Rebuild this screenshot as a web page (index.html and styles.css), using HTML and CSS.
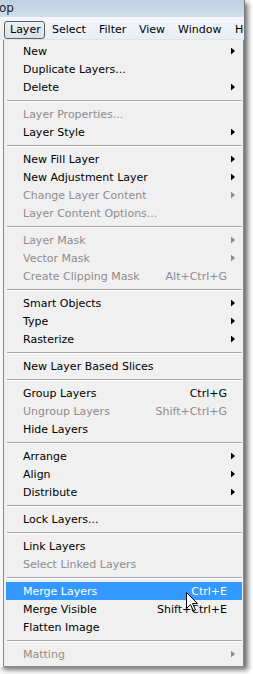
FILE: index.html
```html
<html lang="en">
<head>
    <meta charset="UTF-8">
    <meta name="viewport" content="width=device-width, initial-scale=1.0">
    <title>Layer menu</title>
    <link rel="stylesheet" href="styles.css">
</head>
<body>
    <div class="shot">
        <div class="titlebar"><span class="title">op</span></div>
        <div class="menubar">
            <span class="top open">Layer</span>
            <span class="top m-select">Select</span>
            <span class="top m-filter">Filter</span>
            <span class="top m-view">View</span>
            <span class="top m-window">Window</span>
            <span class="top m-help">Help</span>
        </div>
        <div class="body">
            <div class="menu">
                <div class="item"><span class="label">New</span><span class="arrow"></span></div>
                <div class="item"><span class="label">Duplicate Layers...</span></div>
                <div class="item"><span class="label">Delete</span><span class="arrow"></span></div>
                <div class="sep"></div>
                <div class="item off"><span class="label">Layer Properties...</span></div>
                <div class="item"><span class="label">Layer Style</span><span class="arrow"></span></div>
                <div class="sep"></div>
                <div class="item"><span class="label">New Fill Layer</span><span class="arrow"></span></div>
                <div class="item"><span class="label">New Adjustment Layer</span><span class="arrow"></span></div>
                <div class="item off"><span class="label">Change Layer Content</span><span class="arrow"></span></div>
                <div class="item off"><span class="label">Layer Content Options...</span></div>
                <div class="sep"></div>
                <div class="item off"><span class="label">Layer Mask</span><span class="arrow"></span></div>
                <div class="item off"><span class="label">Vector Mask</span><span class="arrow"></span></div>
                <div class="item off"><span class="label">Create Clipping Mask</span><span class="key">Alt+Ctrl+G</span></div>
                <div class="sep"></div>
                <div class="item"><span class="label">Smart Objects</span><span class="arrow"></span></div>
                <div class="item"><span class="label">Type</span><span class="arrow"></span></div>
                <div class="item"><span class="label">Rasterize</span><span class="arrow"></span></div>
                <div class="sep"></div>
                <div class="item"><span class="label">New Layer Based Slices</span></div>
                <div class="sep"></div>
                <div class="item"><span class="label">Group Layers</span><span class="key">Ctrl+G</span></div>
                <div class="item off"><span class="label">Ungroup Layers</span><span class="key">Shift+Ctrl+G</span></div>
                <div class="item"><span class="label">Hide Layers</span></div>
                <div class="sep"></div>
                <div class="item"><span class="label">Arrange</span><span class="arrow"></span></div>
                <div class="item"><span class="label">Align</span><span class="arrow"></span></div>
                <div class="item"><span class="label">Distribute</span><span class="arrow"></span></div>
                <div class="sep"></div>
                <div class="item"><span class="label">Lock Layers...</span></div>
                <div class="sep"></div>
                <div class="item"><span class="label">Link Layers</span></div>
                <div class="item off"><span class="label">Select Linked Layers</span></div>
                <div class="sep"></div>
                <div class="item hover"><span class="label">Merge Layers</span><span class="key">Ctrl+E</span></div>
                <div class="item"><span class="label">Merge Visible</span><span class="key">Shift+Ctrl+E</span></div>
                <div class="item"><span class="label">Flatten Image</span></div>
                <div class="sep"></div>
                <div class="item off"><span class="label">Matting</span><span class="arrow"></span></div>
            </div>
        </div>
        <svg class="cursor" width="13" height="20" viewBox="0 0 13 20">
            <path d="M0.5 0.5 L0.5 16.5 L4.5 12.5 L7.5 19 L9.5 18 L6.5 11.5 L11.5 11.5 Z" fill="#fff" stroke="#000" stroke-width="1"/>
        </svg>
    </div>
</body>
</html>
```

FILE: styles.css
```css
*{
    margin: 0;
    padding: 0;
    box-sizing: border-box;
}
body{
    width: 253px;
    height: 674px;
    overflow: hidden;
    background: #fff;
    font-family: "DejaVu Sans", Verdana, sans-serif;
    font-size: 11px;
    color: #000;
}
.shot{
    position: relative;
    width: 245px;
    height: 667px;
    overflow: hidden;
    background: #f0f0f0;
    box-shadow: 3px 3px 5px rgba(0,0,0,0.55);
    border-right: 1px solid #7a7a7a;
}
.titlebar{
    height: 17px;
    background: linear-gradient(to bottom, #c0cfe2, #d3dded);
    color: #1e1e1e;
    font-size: 12px;
    line-height: 17px;
}
.title{
    margin-left: -1px;
}
.menubar{
    display: flex;
    height: 23px;
    padding: 4px 0 0 4px;
    background: linear-gradient(to bottom, #f4f6fa, #e9eef5);
    border-bottom: 1px solid #dfe4ea;
    overflow: hidden;
}
.top{
    flex: none;
    height: 18px;
    line-height: 16px;
    padding: 0 0 0 5px;
    border: 1px solid transparent;
    white-space: nowrap;
}
.top.open{
    width: 41px;
    border-color: #5e5e5e;
    border-radius: 3px;
    background: linear-gradient(to bottom, #eef0f3, #dde1e6);
}
.m-select{
    width: 47px;
    margin-left: 1px;
}
.m-filter{
    width: 40px;
}
.m-view{
    width: 39px;
}
.m-window{
    width: 57px;
}
.body{
    height: 627px;
    padding-left: 3px;
    background: #f7f7f7;
}
.menu{
    width: 241px;
    height: 627px;
    padding: 2px 0;
    background: #f0f0f0;
    border: 1px solid #8a8a8a;
    border-top: none;
}
.item{
    display: flex;
    align-items: center;
    height: 18px;
    padding: 0 7px 0 17px;
    margin: 0 1px 0 2px;
    white-space: nowrap;
}
.item .label{
    flex: 1;
}
.item .key{
    margin-right: 8px;
}
.arrow{
    width: 4px;
    height: 7px;
    background: #000;
    clip-path: polygon(0 0, 100% 50%, 0 100%);
}
.off{
    color: #8d8d8d;
}
.off .arrow{
    background: #8d8d8d;
}
.hover{
    background: #3399ff;
    color: #fff;
}
.sep{
    height: 2px;
    margin: 4px 1px 3px 3px;
    border-top: 1px solid #a6a6a6;
    border-bottom: 1px solid #fff;
}
.cursor{
    position: absolute;
    left: 186px;
    top: 592px;
}
```
